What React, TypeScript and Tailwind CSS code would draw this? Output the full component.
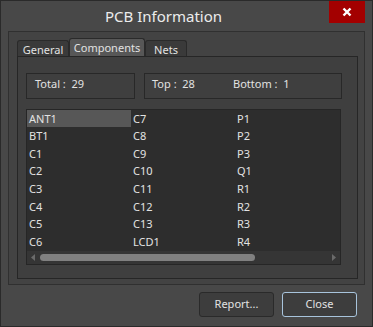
import React from "react";

const names = [
  "ANT1", "BT1", "C1", "C2", "C3", "C4", "C5", "C6",
  "C7", "C8", "C9", "C10", "C11", "C12", "C13", "LCD1",
  "P1", "P2", "P3", "Q1", "R1", "R2", "R3", "R4",
];

const App = () => {
  return (
    <div
      className="w-[373px] h-[327px] bg-[#484848] border border-[#2a2a2a] flex flex-col text-[#e2e2e2] overflow-hidden"
      style={{ fontFamily: '"Noto Sans", "Open Sans", sans-serif' }}
    >
      {/* title bar */}
      <div className="relative h-[30px] shrink-0 flex items-center justify-center">
        <span className="text-[15px] text-[#ececec] ml-[-46px] mt-[1px]">PCB Information</span>
        <button className="absolute right-[7px] top-[-1px] w-[36px] h-[23px] bg-[#a30000] flex items-center justify-center">
          <svg width="10" height="10" viewBox="0 0 10 10">
            <path d="M1.5 1.5 L8.5 8.5 M8.5 1.5 L1.5 8.5" stroke="#ffffff" strokeWidth="2.4" />
          </svg>
        </button>
      </div>

      {/* outer group */}
      <div className="mx-[7px] h-[254px] border border-[#303030] bg-[#434343] pl-[8px] pr-[6px] pt-[7px] pb-[5px] flex flex-col">
        {/* tabs */}
        <div className="flex h-[17px] text-[11px] leading-none">
          <div className="w-[52px] h-[17px] mt-[1px] bg-[#3a3a3a] border border-b-0 border-[#2a2a2a] rounded-t-[3px] flex items-center justify-center">
            General
          </div>
          <div className="w-[76px] h-[18px] bg-[#575757] border border-b-0 border-[#2a2a2a] rounded-t-[3px] flex items-center justify-center -mt-[1px]">
            Components
          </div>
          <div className="w-[42px] h-[17px] mt-[1px] bg-[#3a3a3a] border border-b-0 border-[#2a2a2a] rounded-t-[3px] flex items-center justify-center">
            Nets
          </div>
        </div>

        {/* tab content */}
        <div className="w-[341px] h-[224px] border border-[#262626] bg-[#3f3f3f] pl-[8px] pt-[16px] flex flex-col">
          <div className="flex gap-[9px] text-[11px]">
            <div className="w-[109px] h-[26px] border border-[#282828] flex items-center pl-[8px] pb-[3px]">
              Total :&nbsp; 29
            </div>
            <div className="w-[198px] h-[26px] border border-[#282828] flex items-center pl-[7px] pb-[3px]">
              <span className="w-[81px]">Top :&nbsp; 28</span>
              <span>Bottom :&nbsp;&nbsp;1</span>
            </div>
          </div>

          {/* list */}
          <div className="mt-[10px] w-[315px] h-[156px] border border-[#262626] bg-[#2d2d2d] flex flex-col">
            <div className="grid grid-flow-col grid-rows-8 grid-cols-[104px_104px_104px] text-[11px] leading-none flex-1">
              {names.map((n, i) => (
                <div
                  key={n}
                  className={
                    "h-[16px] pl-[2px] flex items-center " + (i === 0 ? "bg-[#575757] h-[17px]" : "")
                  }
                >
                  {n}
                </div>
              ))}
            </div>
            <div className="h-[13px] bg-[#353535] flex items-center px-[4px] gap-[5px] mb-[0px]">
              <svg width="4" height="7" viewBox="0 0 4 7">
                <path d="M4 0 L0 3.5 L4 7 Z" fill="#6a6a6a" />
              </svg>
              <div className="w-[215px] h-[7px] rounded-full bg-[#808080]" />
              <div className="flex-1" />
              <svg width="4" height="7" viewBox="0 0 4 7">
                <path d="M0 0 L4 3.5 L0 7 Z" fill="#6a6a6a" />
              </svg>
            </div>
          </div>
        </div>
      </div>

      {/* buttons */}
      <div className="flex justify-end gap-[8px] pr-[15px] mt-[7px] text-[11px]">
        <button className="w-[75px] h-[25px] border border-[#2a2a2a] bg-[#3d3d3d] rounded-[3px] text-[#e2e2e2]">
          Report...
        </button>
        <button className="w-[75px] h-[25px] border border-[#a8c4dc] bg-[#3d3d3d] rounded-[3px] text-[#e2e2e2]">
          Close
        </button>
      </div>
    </div>
  );
};

export default App;
